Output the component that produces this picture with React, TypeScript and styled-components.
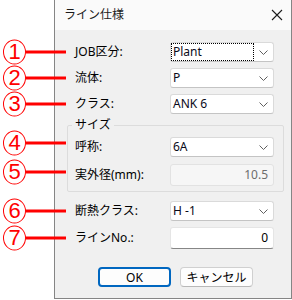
import React from "react"
import styled, { createGlobalStyle } from "styled-components"

const GlobalStyle = createGlobalStyle`
  html, body {
    margin: 0;
    padding: 0;
    background: #ffffff;
  }
  body {
    font-family: "Noto Sans", "Noto Sans CJK JP", sans-serif;
    font-size: 12px;
    color: #000000;
  }
`

const Combo = ({ value, focused }: { value: string; focused?: boolean }) => (
  <ComboBox>
    <ComboText $focused={focused}>{value}</ComboText>
    <ArrowArea>
      <svg width="9" height="5" viewBox="0 0 9 5">
        <path d="M0.5 0.5 L4.5 4.5 L8.5 0.5" fill="none" stroke="#606060" strokeWidth="1" />
      </svg>
    </ArrowArea>
  </ComboBox>
)

const Mark = ({ n, shift = 0 }: { n: number; shift?: number }) => (
  <Callout $shift={shift}>
    <Badge>{n}</Badge>
    <Leader />
  </Callout>
)

export default function App() {
  return (
    <Page>
      <GlobalStyle />
      <Dialog>
        <TitleBar>
          <Title>ライン仕様</Title>
          <CloseButton>
            <svg width="12" height="12" viewBox="0 0 12 12">
              <path d="M1 1 L11 11 M11 1 L1 11" stroke="#1c1c1c" strokeWidth="1.1" />
            </svg>
          </CloseButton>
        </TitleBar>
        <Body>
          <Row>
            <Mark n={1} />
            <Label>JOB区分:</Label>
            <Combo value="Plant" focused />
          </Row>
          <Row>
            <Mark n={2} />
            <Label>流体:</Label>
            <Combo value="P" />
          </Row>
          <Row>
            <Mark n={3} />
            <Label>クラス:</Label>
            <Combo value="ANK 6" />
          </Row>
          <Group>
            <Legend>サイズ</Legend>
            <GroupRow>
              <Mark n={4} shift={-4} />
              <Label>呼称:</Label>
              <Combo value="6A" />
            </GroupRow>
            <GroupRow>
              <Mark n={5} shift={-3} />
              <Label>実外径(mm):</Label>
              <TextBox $disabled>10.5</TextBox>
            </GroupRow>
          </Group>
          <Row>
            <Mark n={6} />
            <Label>断熱クラス:</Label>
            <Combo value="H -1" />
          </Row>
          <Row>
            <Mark n={7} />
            <Label>ラインNo.:</Label>
            <TextBox>0</TextBox>
          </Row>
          <Buttons>
            <Button $primary>OK</Button>
            <Button>キャンセル</Button>
          </Buttons>
        </Body>
      </Dialog>
    </Page>
  )
}

const Page = styled.div`
  width: 292px;
  height: 300px;
  padding-left: 54px;
  box-sizing: border-box;
  display: flex;
  align-items: flex-start;
`
const Dialog = styled.div`
  width: 238px;
  height: 299px;
  box-sizing: border-box;
  background: #f0f0f0;
  border: 1px solid #858585;
  border-top: none;
  display: flex;
  flex-direction: column;
`
const TitleBar = styled.div`
  height: 30px;
  flex: none;
  display: flex;
  align-items: center;
  justify-content: space-between;
  padding: 0 7px 0 9px;
  background: #fafafa;
`
const Title = styled.span`
  font-size: 12px;
  line-height: 14px;
  color: #1a1a1a;
`
const CloseButton = styled.span`
  display: flex;
  align-items: center;
  justify-content: center;
  width: 14px;
  height: 14px;
`
const Body = styled.div`
  display: flex;
  flex-direction: column;
  padding: 12px 0 0 12px;
`
const Row = styled.div`
  position: relative;
  display: grid;
  grid-template-columns: 95px 104px;
  align-items: center;
  margin-left: 8px;
  & + & {
    margin-top: 6px;
  }
`
const GroupRow = styled(Row)`
  margin-left: 0;
  & + & {
    margin-top: 7px;
  }
`
const Label = styled.span`
  font-size: 12px;
  line-height: 14px;
  white-space: nowrap;
`
const ComboBox = styled.div`
  display: flex;
  height: 20px;
  box-sizing: border-box;
  border: 1px solid #dadada;
  border-bottom-color: #c4c4c4;
  border-radius: 3px;
  background: #ffffff;
`
const ComboText = styled.span<{ $focused?: boolean }>`
  flex: 1;
  box-sizing: border-box;
  border: 1px dotted ${(p) => (p.$focused ? "#000000" : "transparent")};
  padding-left: 1px;
  font-size: 12px;
  line-height: 16px;
  color: #0a0a1a;
`
const ArrowArea = styled.span`
  width: 19px;
  display: flex;
  align-items: center;
  justify-content: center;
`
const TextBox = styled.div<{ $disabled?: boolean }>`
  height: 22px;
  box-sizing: border-box;
  padding-right: 5px;
  text-align: right;
  font-size: 12px;
  line-height: 20px;
  border: 1px solid ${(p) => (p.$disabled ? "#e2e2e2" : "#e5e5e5")};
  border-bottom-color: ${(p) => (p.$disabled ? "#e2e2e2" : "#868686")};
  border-radius: 3px;
  background: ${(p) => (p.$disabled ? "#f6f6f6" : "#ffffff")};
  color: ${(p) => (p.$disabled ? "#6d6d6d" : "#000000")};
`
const Group = styled.fieldset`
  margin: 4px 0 0 0;
  width: 217px;
  box-sizing: border-box;
  padding: 5px 9px 5px 7px;
  border: 1px solid #dcdcdc;
  border-radius: 2px;
  min-width: 0;

  & + ${Row} {
    margin-top: 9px;
  }
`
const Legend = styled.legend`
  padding: 0 3px;
  margin-left: -3px;
  font-size: 12px;
  line-height: 14px;
`
const Buttons = styled.div`
  display: flex;
  gap: 9px;
  margin-top: 18px;
  padding-left: 31px;
`
const Button = styled.div<{ $primary?: boolean }>`
  width: 73px;
  height: 20px;
  box-sizing: border-box;
  display: flex;
  align-items: center;
  justify-content: center;
  font-size: 12px;
  background: #fdfdfd;
  border-radius: 4px;
  border: ${(p) => (p.$primary ? "2px solid #0067c0" : "1px solid #d0d0d0")};
  border-bottom-color: ${(p) => (p.$primary ? "#0067c0" : "#b8b8b8")};
`
const Callout = styled.span<{ $shift: number }>`
  position: absolute;
  right: calc(100% + 9px);
  top: calc(50% + ${(p) => p.$shift}px);
  transform: translateY(-50%);
  width: 63px;
  display: flex;
  align-items: center;
`
const Badge = styled.span`
  flex: none;
  width: 23px;
  height: 25px;
  box-sizing: border-box;
  border: 1.5px solid #ff0000;
  border-radius: 50%;
  color: #ff0000;
  font-family: "Liberation Sans", sans-serif;
  font-size: 22px;
  line-height: 22px;
  text-align: center;
`
const Leader = styled.span`
  flex: 1;
  height: 3px;
  background: #ff0000;
`
